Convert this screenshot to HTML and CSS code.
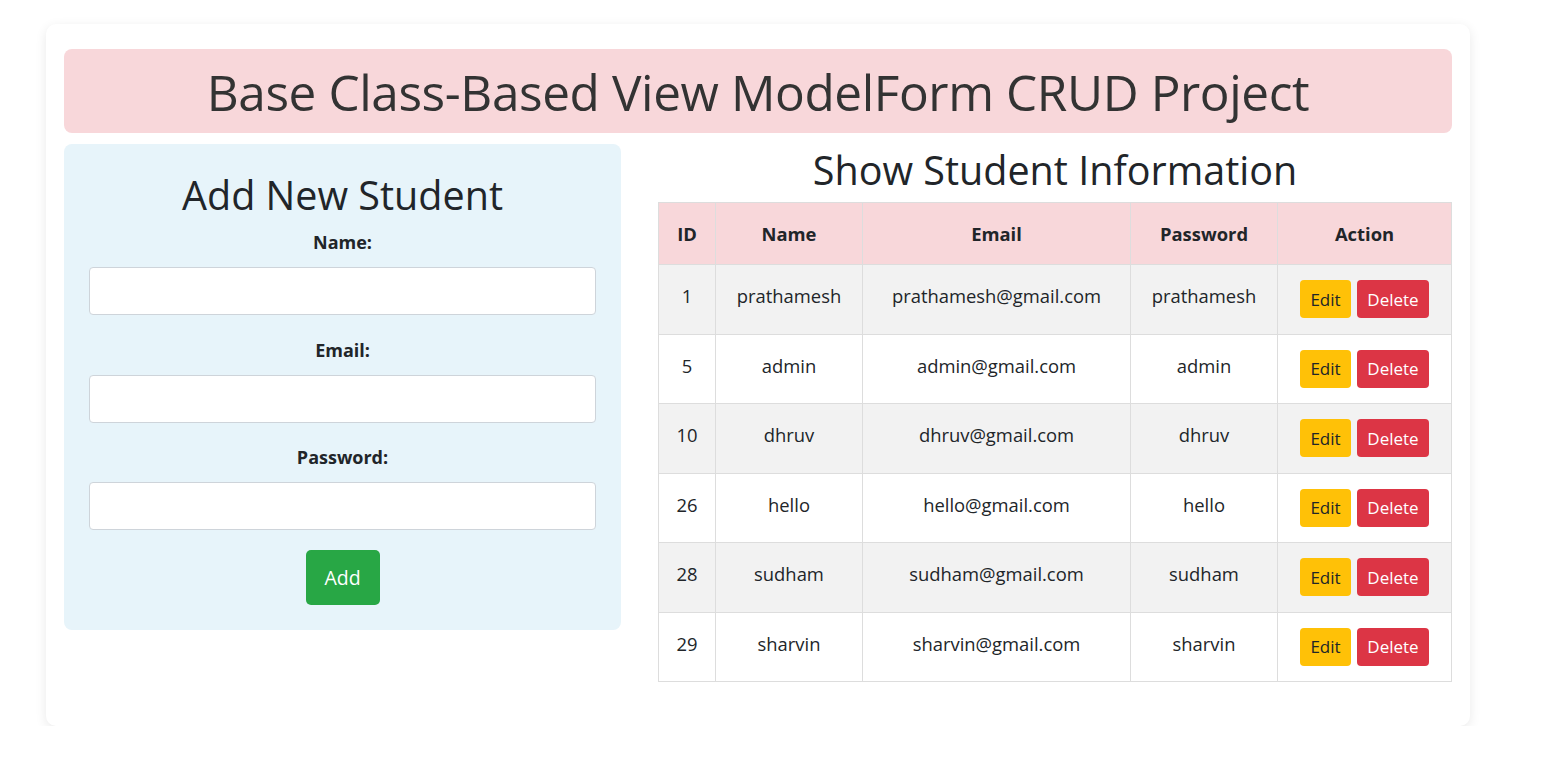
FILE: index.html
```html
<!DOCTYPE html>
<html lang="en">
<head>
<meta charset="utf-8">
<title>Base Class-Based View ModelForm CRUD Project</title>
<link rel="stylesheet" href="styles.css">
</head>
<body>
<div class="card">
  <h1 class="banner">Base Class-Based View ModelForm CRUD Project</h1>
  <div class="columns">
    <div class="form-panel">
      <h2 class="panel-title">Add New Student</h2>
      <form class="student-form">
        <div class="field">
          <label class="field-label" for="name">Name:</label>
          <input class="field-input" type="text" id="name">
        </div>
        <div class="field">
          <label class="field-label" for="email">Email:</label>
          <input class="field-input" type="email" id="email">
        </div>
        <div class="field">
          <label class="field-label" for="password">Password:</label>
          <input class="field-input" type="password" id="password">
        </div>
        <button class="btn btn-add" type="button">Add</button>
      </form>
    </div>
    <div class="list-panel">
      <h2 class="panel-title list-title">Show Student Information</h2>
      <table class="students">
        <colgroup>
          <col class="c-id"><col class="c-name"><col class="c-email"><col class="c-pass"><col class="c-act">
        </colgroup>
        <thead>
          <tr><th>ID</th><th>Name</th><th>Email</th><th>Password</th><th>Action</th></tr>
        </thead>
        <tbody>
          <tr><td>1</td><td>prathamesh</td><td>prathamesh@gmail.com</td><td>prathamesh</td><td class="act-cell"><span class="actions"><button class="btn btn-edit">Edit</button><button class="btn btn-delete">Delete</button></span></td></tr>
          <tr><td>5</td><td>admin</td><td>admin@gmail.com</td><td>admin</td><td class="act-cell"><span class="actions"><button class="btn btn-edit">Edit</button><button class="btn btn-delete">Delete</button></span></td></tr>
          <tr><td>10</td><td>dhruv</td><td>dhruv@gmail.com</td><td>dhruv</td><td class="act-cell"><span class="actions"><button class="btn btn-edit">Edit</button><button class="btn btn-delete">Delete</button></span></td></tr>
          <tr><td>26</td><td>hello</td><td>hello@gmail.com</td><td>hello</td><td class="act-cell"><span class="actions"><button class="btn btn-edit">Edit</button><button class="btn btn-delete">Delete</button></span></td></tr>
          <tr><td>28</td><td>sudham</td><td>sudham@gmail.com</td><td>sudham</td><td class="act-cell"><span class="actions"><button class="btn btn-edit">Edit</button><button class="btn btn-delete">Delete</button></span></td></tr>
          <tr><td>29</td><td>sharvin</td><td>sharvin@gmail.com</td><td>sharvin</td><td class="act-cell"><span class="actions"><button class="btn btn-edit">Edit</button><button class="btn btn-delete">Delete</button></span></td></tr>
        </tbody>
      </table>
    </div>
  </div>
</div>
</body>
</html>
```
FILE: styles.css
```css
* { box-sizing: border-box; }

html, body {
  margin: 0;
  background: #ffffff;
}

body {
  padding: 24px 0 0 46px;
  font-family: "Open Sans", "Noto Sans", sans-serif;
  color: #212529;
}

.card {
  width: 1424px;
  background: #fff;
  border-radius: 10px;
  box-shadow: 0 3px 12px rgba(0, 0, 0, 0.09);
  padding: 25px 18px 44px;
}

.banner {
  margin: 0;
  background: #f8d7da;
  border-radius: 8px;
  color: #333333;
  text-align: center;
  font-size: 49.5px;
  font-weight: 400;
  line-height: 62px;
  padding: 12px 0 10px;
  letter-spacing: -0.4px;
}

.columns {
  display: grid;
  grid-template-columns: 557px 1fr;
  column-gap: 37px;
  margin-top: 11px;
  align-items: start;
}

.form-panel {
  background: #e7f4fa;
  border-radius: 8px;
  padding: 27px 25px 25px;
}

.panel-title {
  margin: 0 0 10px;
  text-align: center;
  font-size: 39.5px;
  font-weight: 400;
  line-height: 48px;
  color: #212529;
  letter-spacing: 0;
}

.student-form {
  display: flex;
  flex-direction: column;
  align-items: center;
}

.field {
  display: flex;
  flex-direction: column;
  align-items: center;
  width: 100%;
  margin-bottom: 21.5px;
}

.field:last-of-type { margin-bottom: 19.5px; }

.field-label {
  font-size: 18px;
  font-weight: 700;
  line-height: 27px;
  margin-bottom: 11px;
}

.field-input {
  width: 100%;
  height: 48px;
  border: 1px solid #ced4da;
  border-radius: 4px;
  background: #fff;
  font: inherit;
}

.btn {
  border: none;
  border-radius: 4px;
  font-family: inherit;
  cursor: pointer;
}

.btn-add {
  width: 74px;
  height: 55px;
  background: #28a745;
  color: #fff;
  font-size: 19.5px;
  border-radius: 5px;
}

.list-title {
  margin: 2px 0 8px;
}

.students {
  width: 100%;
  border-collapse: collapse;
  font-size: 18.4px;
  text-align: center;
}

.c-id { width: 57px; }
.c-name { width: 147px; }
.c-email { width: 268px; }
.c-pass { width: 147px; }
.c-act { width: 174px; }

.students th,
.students td {
  border: 1px solid #dddddd;
  vertical-align: middle;
  padding: 0 6px;
}

.students th {
  background: #f8d7da;
  font-weight: 700;
  font-size: 18.4px;
  height: 62px;
  line-height: 27px;
}

.students td {
  height: 69.5px;
  line-height: 24px;
  color: #212529;
  padding-bottom: 6px;
}

.students td.act-cell {
  padding-bottom: 0;
}

.students tbody tr:nth-child(odd) td {
  background: #f2f2f2;
}

.actions {
  display: inline-flex;
  gap: 6px;
  vertical-align: middle;
}

.btn-edit {
  width: 51px;
  height: 38px;
  background: #ffc107;
  color: #212529;
  font-size: 17px;
}

.btn-delete {
  width: 72px;
  height: 38px;
  background: #dc3545;
  color: #fff;
  font-size: 17px;
}
```
